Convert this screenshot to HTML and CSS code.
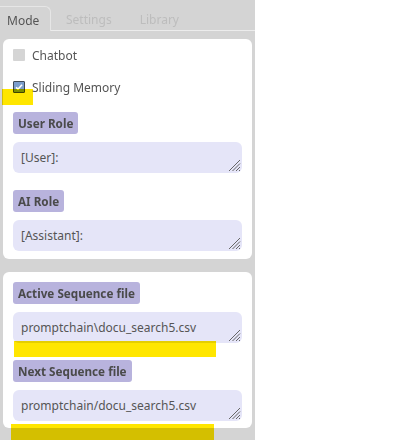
FILE: index.html
```html
<!DOCTYPE html>
<html>
<head>
<meta charset="utf-8">
<link rel="stylesheet" href="styles.css">
</head>
<body>
<div class="panel">
  <div class="tabs">
    <div class="tab active">Mode</div>
    <div class="tab">Settings</div>
    <div class="tab">Library</div>
    <div class="tab-rest"></div>
  </div>
  <div class="card card-mode">
    <label class="check-row">
      <span class="box"></span>
      <span class="check-text">Chatbot</span>
    </label>
    <label class="check-row second">
      <span class="box checked">
        <svg viewBox="0 0 12 12" width="12" height="12"><path d="M3 6.3 L5 8.2 L9 3.8" fill="none" stroke="#fff" stroke-width="1.6"/></svg>
      </span>
      <span class="check-text">Sliding Memory</span>
      <span class="mark mark-check"></span>
    </label>
    <div class="tag">User Role</div>
    <div class="area">[User]:<svg class="grip" viewBox="0 0 14 14" width="14" height="14"><path d="M13 2 L2 13 M13 5.5 L5.5 13 M13 9 L9 13 M13 12 L12 13" stroke="#666" stroke-width="1"/></svg></div>
    <div class="tag gap">AI Role</div>
    <div class="area">[Assistant]:<svg class="grip" viewBox="0 0 14 14" width="14" height="14"><path d="M13 2 L2 13 M13 5.5 L5.5 13 M13 9 L9 13 M13 12 L12 13" stroke="#666" stroke-width="1"/></svg></div>
  </div>
  <div class="card card-seq">
    <div class="tag">Active Sequence file</div>
    <div class="area">promptchain\docu_search5.csv<svg class="grip" viewBox="0 0 14 14" width="14" height="14"><path d="M13 2 L2 13 M13 5.5 L5.5 13 M13 9 L9 13 M13 12 L12 13" stroke="#666" stroke-width="1"/></svg><span class="mark mark-a"></span></div>
    <div class="tag gap">Next Sequence file</div>
    <div class="area">promptchain/docu_search5.csv<svg class="grip" viewBox="0 0 14 14" width="14" height="14"><path d="M13 2 L2 13 M13 5.5 L5.5 13 M13 9 L9 13 M13 12 L12 13" stroke="#666" stroke-width="1"/></svg><span class="mark mark-b"></span></div>
  </div>
</div>
</body>
</html>
```
FILE: styles.css
```css
html, body {
  margin: 0;
  padding: 0;
  background: #ffffff;
}
body {
  font-family: "Noto Sans", "DejaVu Sans", sans-serif;
  color: #555;
}
.panel {
  width: 255px;
  height: 440px;
  background: #d4d4d4;
  overflow: hidden;
  display: flex;
  flex-direction: column;
}
.tabs {
  display: flex;
  align-items: flex-end;
  height: 31px;
  flex: none;
}
.tab {
  font-size: 12px;
  color: #bdbdbd;
  height: 22px;
  padding: 2px 14px 0 14px;
  line-height: 24px;
  border-bottom: 1px solid #ececec;
}
.tab.active {
  color: #555;
  padding: 2px 12px 0 7px;
  border: 1px solid #e6e6e6;
  border-left: none;
  border-bottom: none;
  border-top-right-radius: 6px;
  height: 22px;
  width: 31px;
}
.tab.active + .tab {
  padding-left: 15px;
}
.tab-rest {
  flex: 1;
  border-bottom: 1px solid #ececec;
}
.card {
  background: #fff;
  margin-left: 3px;
  width: 249px;
  border-radius: 6px;
  box-sizing: border-box;
  padding: 0 10px;
  flex: none;
}
.card-mode {
  margin-top: 8px;
  height: 220px;
  padding-top: 10px;
}
.card-seq {
  margin-top: 13px;
  height: 156px;
  padding-top: 9px;
}
.check-row {
  display: flex;
  align-items: center;
  height: 12px;
  gap: 7px;
  font-size: 12px;
  color: #555;
  position: relative;
}
.check-row.second {
  margin-top: 20px;
}
.box {
  width: 12px;
  height: 12px;
  box-sizing: border-box;
  background: #d5d5d5;
  border-radius: 1px;
  flex: none;
  display: flex;
}
.box.checked {
  background: #7b9dcc;
  border: 1px solid #3f4a57;
}
.box.checked svg {
  margin: -1px;
}
.check-text {
  line-height: 12px;
  position: relative;
  top: 1px;
}
.tag {
  display: inline-block;
  margin-top: 19px;
  background: #b8b3dd;
  color: #4a4a4a;
  font-weight: bold;
  font-size: 11.7px;
  height: 22px;
  line-height: 22px;
  padding: 0 5px;
  border-radius: 3px;
}
.card-seq .tag:first-child {
  margin-top: 0;
}
.tag.gap {
  margin-top: 17px;
}
.area {
  position: relative;
  margin-top: 8px;
  width: 229px;
  height: 31px;
  box-sizing: border-box;
  background: #e5e5f8;
  border-radius: 6px;
  padding: 0 8px;
  font-size: 12px;
  line-height: 31px;
  color: #555;
}
.grip {
  position: absolute;
  right: 1px;
  bottom: 1px;
}
.mark {
  position: absolute;
  background: #ffe600;
  mix-blend-mode: multiply;
}
.mark-check {
  left: -11px;
  top: 8px;
  width: 31px;
  height: 16px;
}
.mark-a {
  left: 1px;
  top: 29px;
  width: 202px;
  height: 16px;
}
.mark-b {
  left: -2px;
  top: 34px;
  width: 203px;
  height: 20px;
}
```
